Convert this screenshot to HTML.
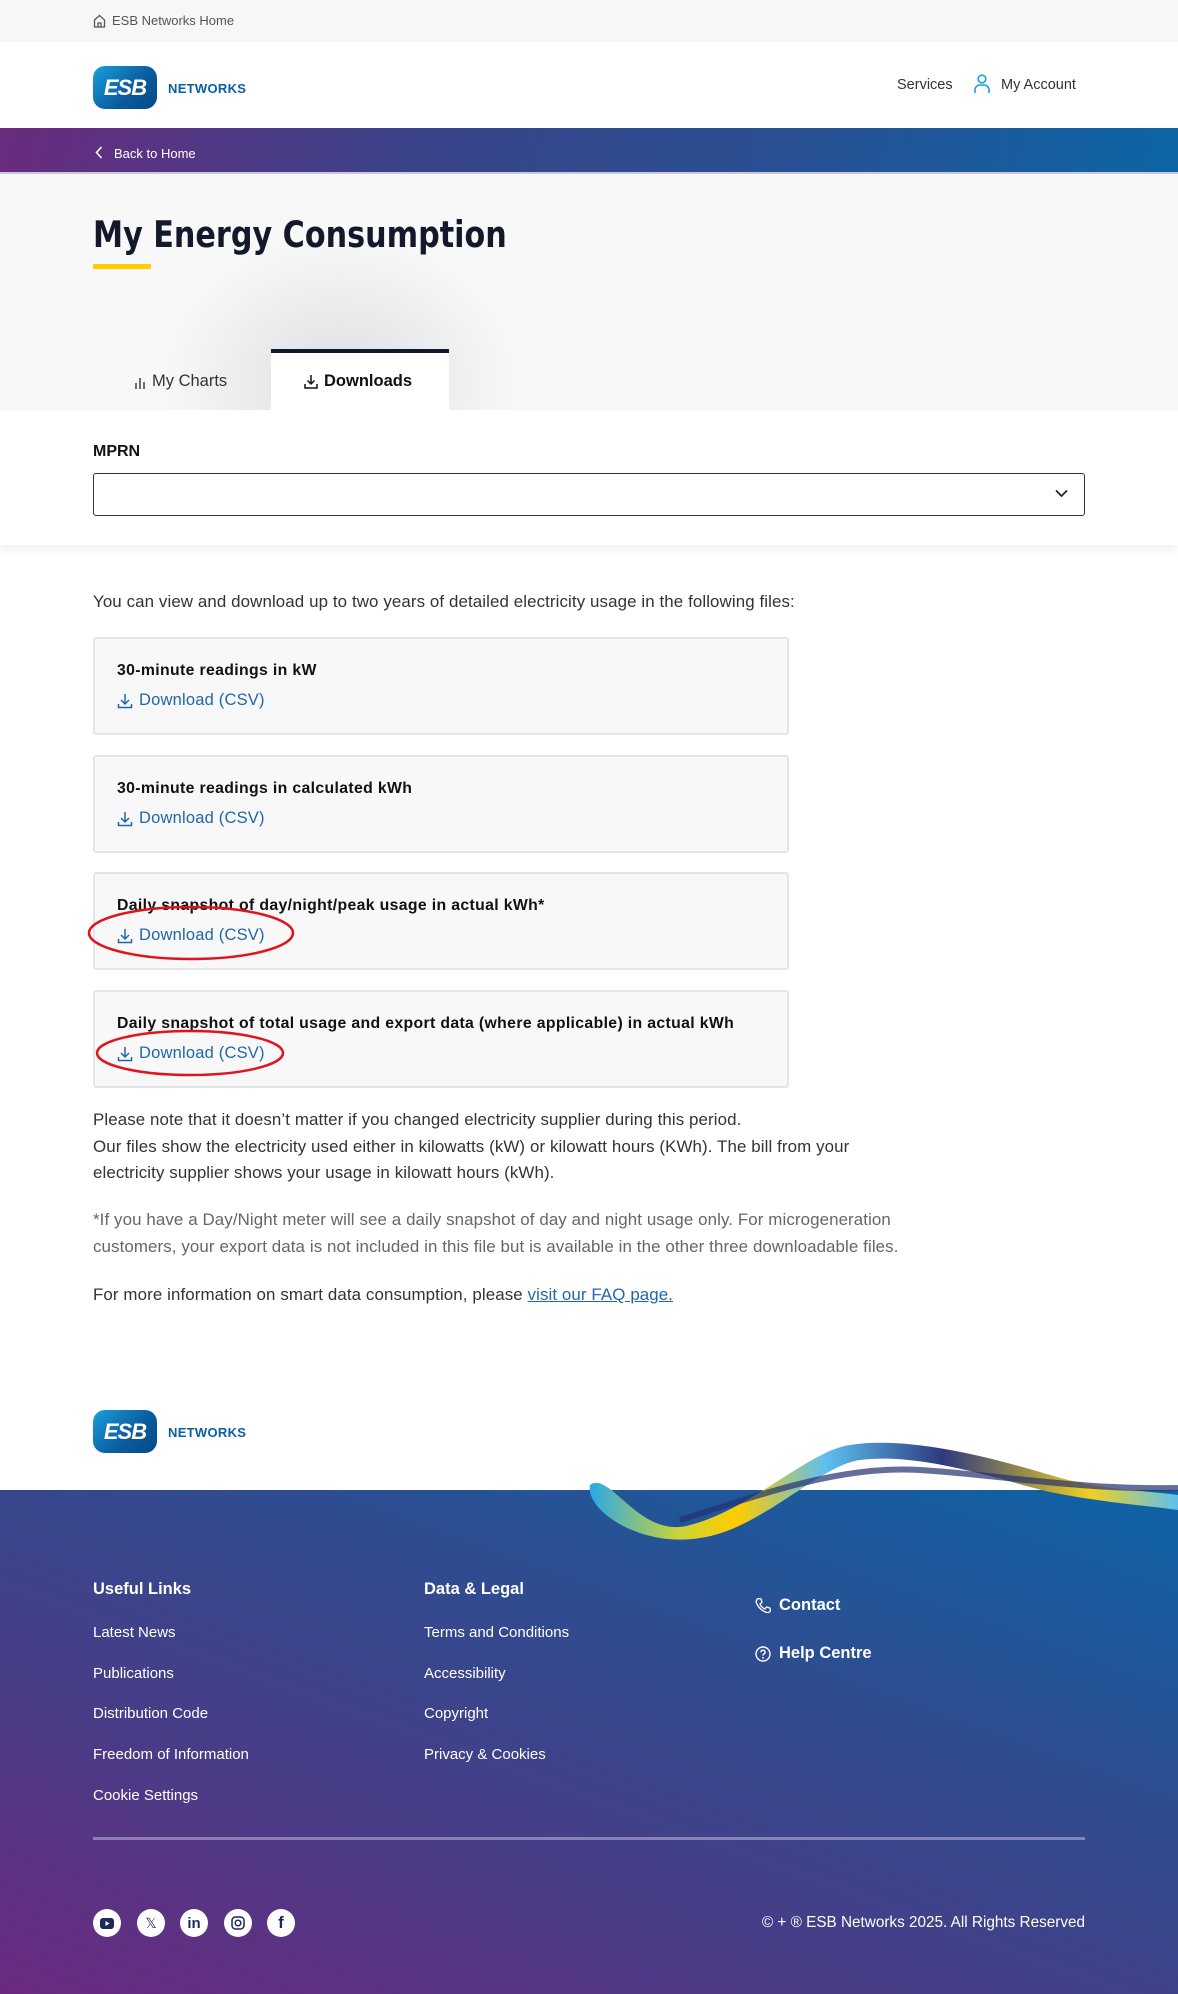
<!DOCTYPE html>
<html><head><meta charset="utf-8">
<style>
*{box-sizing:border-box;margin:0;padding:0}
body{width:1178px;height:1994px;font-family:"Liberation Sans",sans-serif;background:#fff;position:relative;overflow:hidden;color:#222}
.abs{position:absolute}
.topbar{left:0;top:0;width:1178px;height:42px;background:#f7f7f7}
.header{left:0;top:42px;width:1178px;height:86px;background:#fff}
.grad{left:0;top:128px;width:1178px;height:46px;background:linear-gradient(100deg,#6a2b7e 0%,#3a438a 35%,#2a4f92 65%,#0d65a5 100%);border-bottom:2px solid #c9c6d8}
.hero{left:0;top:174px;width:1178px;height:236px;background:#f8f8f8;overflow:hidden}
.logo{width:64px;height:43px;border-radius:12px;background:linear-gradient(135deg,#1aa0dc,#0a5a9e 60%,#074a85);color:#fff;font-weight:bold;font-size:22px;display:flex;align-items:center;justify-content:center;letter-spacing:-1px;font-style:italic}
.net{color:#0b5fa0;font-weight:bold;font-size:13px;letter-spacing:.3px}
.card{left:93px;width:696px;height:98px;background:#f8f8f8;border:2px solid #e4e5e7;border-radius:3px}
.card b{position:absolute;left:22px;top:23px;font-size:15.8px;letter-spacing:.35px;color:#111}
.card .dl{position:absolute;left:22px;top:52px;font-size:16.5px;color:#1f67a8;display:flex;align-items:center;gap:6px;letter-spacing:.2px}
.p{left:93px;font-size:16.9px;color:#333;line-height:26.5px;letter-spacing:.1px}
.footer{left:0;top:1490px;width:1178px;height:504px;background:linear-gradient(20deg,#6b2a80 0%,#473d87 35%,#2f4c90 65%,#0d64a6 100%)}
.fh{font-weight:bold;color:#fff;font-size:16.5px}
.fl{color:#fff;font-size:15px}
.soc{width:28px;height:28px;border-radius:50%;background:#fff;top:1909px;display:flex;align-items:center;justify-content:center;color:#1c2a5a;font-weight:bold;font-size:15px}
</style></head><body>
<div class="abs topbar"></div>
<div class="abs" style="left:93px;top:13px;font-size:13px;color:#555;display:flex;align-items:center;gap:6px">
<svg width="13" height="14" viewBox="0 0 13 14"><path d="M1.5 6L6.5 1.5 11.5 6V13H1.5Z M5 13V9h3v4" fill="none" stroke="#555" stroke-width="1.3"/></svg>ESB Networks Home</div>
<div class="abs header"></div>
<div class="abs logo" style="left:93px;top:66px">ESB</div>
<div class="abs net" style="left:168px;top:81px">NETWORKS</div>
<div class="abs" style="left:897px;top:77px;font-size:14.5px;color:#333">Services</div>
<svg class="abs" style="left:973px;top:74px" width="18" height="20" viewBox="0 0 18 20"><circle cx="9" cy="5" r="3.8" fill="none" stroke="#1aa0dc" stroke-width="1.6"/><path d="M2 19v-3a5 5 0 0 1 5-5h4a5 5 0 0 1 5 5v3" fill="none" stroke="#1aa0dc" stroke-width="1.6"/></svg>
<div class="abs" style="left:1001px;top:77px;font-size:14.5px;color:#333">My Account</div>
<div class="abs grad"></div>
<svg class="abs" style="left:95px;top:146px" width="8" height="13" viewBox="0 0 8 13"><path d="M6.5 1L1.5 6.5 6.5 12" fill="none" stroke="#fff" stroke-width="1.6"/></svg>
<div class="abs" style="left:114px;top:146px;font-size:13px;color:#fff">Back to Home</div>
<div class="abs hero">
 <div class="abs" style="left:160px;top:60px;width:360px;height:300px;border-radius:50%;background:radial-gradient(closest-side,rgba(200,202,208,.55),rgba(248,248,248,0))"></div>
</div>
<div class="abs" style="left:93px;top:213px;font-size:36.5px;font-weight:bold;color:#13182b;font-family:'DejaVu Sans Condensed','Liberation Sans',sans-serif;letter-spacing:0;transform:scaleX(.92);transform-origin:left top;white-space:nowrap">My Energy Consumption</div>
<div class="abs" style="left:93px;top:264px;width:58px;height:5px;background:#ffcc00;border-radius:1px"></div>
<div class="abs" style="left:134px;top:372px;font-size:16.5px;color:#333;display:flex;align-items:center;gap:6px">
<svg width="12" height="14" viewBox="0 0 12 14"><path d="M2 14V8M6 14V3M10 14V7" stroke="#333" stroke-width="1.4"/></svg>My Charts</div>
<div class="abs" style="left:271px;top:349px;width:178px;height:62px;background:#fff;border-top:4px solid #111a2c"></div>
<div class="abs" style="left:304px;top:372px;font-size:16.5px;color:#111;font-weight:bold;display:flex;align-items:center;gap:6px">
<svg width="14" height="15" viewBox="0 0 14 15"><path d="M7 1v9M3.5 6.5L7 10l3.5-3.5M1 10v4h12v-4" fill="none" stroke="#111" stroke-width="1.5"/></svg>Downloads</div>
<div class="abs" style="left:0;top:410px;width:1178px;height:135px;background:#fff;box-shadow:0 6px 8px rgba(0,0,0,.05)"></div>
<div class="abs" style="left:93px;top:443px;font-size:16px;font-weight:bold;color:#111">MPRN</div>
<div class="abs" style="left:93px;top:473px;width:992px;height:43px;border:1.5px solid #333;border-radius:3px;background:#fff"></div>
<svg class="abs" style="left:1055px;top:489px" width="13" height="9" viewBox="0 0 13 9"><path d="M1 1.5l5.5 5.5 5.5-5.5" fill="none" stroke="#222" stroke-width="1.7"/></svg>
<div class="abs p" style="top:589px">You can view and download up to two years of detailed electricity usage in the following files:</div>

<div class="abs card" style="top:637px"><b>30-minute readings in kW</b><span class="dl"><svg width="16" height="16" viewBox="0 0 16 16"><path d="M8 1v10M4 7l4 4 4-4M1.5 11v3.5h13V11" fill="none" stroke="#1f67a8" stroke-width="1.5"/></svg>Download (CSV)</span></div>
<div class="abs card" style="top:755px"><b>30-minute readings in calculated kWh</b><span class="dl"><svg width="16" height="16" viewBox="0 0 16 16"><path d="M8 1v10M4 7l4 4 4-4M1.5 11v3.5h13V11" fill="none" stroke="#1f67a8" stroke-width="1.5"/></svg>Download (CSV)</span></div>
<div class="abs card" style="top:872px"><b>Daily snapshot of day/night/peak usage in actual kWh*</b><span class="dl"><svg width="16" height="16" viewBox="0 0 16 16"><path d="M8 1v10M4 7l4 4 4-4M1.5 11v3.5h13V11" fill="none" stroke="#1f67a8" stroke-width="1.5"/></svg>Download (CSV)</span></div>
<div class="abs card" style="top:990px"><b>Daily snapshot of total usage and export data (where applicable) in actual kWh</b><span class="dl"><svg width="16" height="16" viewBox="0 0 16 16"><path d="M8 1v10M4 7l4 4 4-4M1.5 11v3.5h13V11" fill="none" stroke="#1f67a8" stroke-width="1.5"/></svg>Download (CSV)</span></div>
<svg class="abs" style="left:0;top:0" width="400" height="1100" viewBox="0 0 400 1100"><ellipse cx="191" cy="933" rx="102" ry="26" fill="none" stroke="#e0141c" stroke-width="2.5"/><ellipse cx="190" cy="1053" rx="93" ry="22" fill="none" stroke="#e0141c" stroke-width="2.5"/></svg>

<div class="abs p" style="top:1107px">Please note that it doesn’t matter if you changed electricity supplier during this period.<br>Our files show the electricity used either in kilowatts (kW) or kilowatt hours (KWh). The bill from your<br>electricity supplier shows your usage in kilowatt hours (kWh).</div>
<div class="abs p" style="top:1207px;color:#666">*If you have a Day/Night meter will see a daily snapshot of day and night usage only. For microgeneration<br>customers, your export data is not included in this file but is available in the other three downloadable files.</div>
<div class="abs p" style="top:1282px">For more information on smart data consumption, please <span style="color:#1f67a8;text-decoration:underline">visit our FAQ page.</span></div>

<div class="abs logo" style="left:93px;top:1410px">ESB</div>
<div class="abs net" style="left:168px;top:1425px">NETWORKS</div>
<div class="abs footer"></div>
<svg class="abs" style="left:580px;top:1430px" width="598" height="120" viewBox="0 0 598 120">
<defs><linearGradient id="r1" x1="0" x2="1"><stop offset="0" stop-color="#2aa8e8"/><stop offset=".15" stop-color="#c8d43a"/><stop offset=".25" stop-color="#ffcc00"/><stop offset=".4" stop-color="#5ec0f0"/><stop offset=".6" stop-color="#2d3a80"/><stop offset=".85" stop-color="#f0d020"/><stop offset="1" stop-color="#5ec0f0"/></linearGradient></defs>
<path d="M10 55 C30 40,60 110,110 95 C170 80,230 20,270 15 C330 5,420 30,470 45 C520 60,560 60,598 65 L598 80 C560 75,520 72,470 62 C420 50,340 22,280 30 C240 35,180 100,120 108 C60 118,5 80,10 55Z" fill="url(#r1)"/>
<path d="M100 90 C180 65,260 35,340 40 C420 45,500 60,598 58" fill="none" stroke="#243070" stroke-width="6" opacity=".7"/>
</svg>
<div class="abs fh" style="left:93px;top:1580px">Useful Links</div>
<div class="abs fh" style="left:424px;top:1580px">Data &amp; Legal</div>
<div class="abs fl" style="left:93px;top:1624px">Latest News</div>
<div class="abs fl" style="left:93px;top:1665px">Publications</div>
<div class="abs fl" style="left:93px;top:1705px">Distribution Code</div>
<div class="abs fl" style="left:93px;top:1746px">Freedom of Information</div>
<div class="abs fl" style="left:93px;top:1787px">Cookie Settings</div>
<div class="abs fl" style="left:424px;top:1624px">Terms and Conditions</div>
<div class="abs fl" style="left:424px;top:1665px">Accessibility</div>
<div class="abs fl" style="left:424px;top:1705px">Copyright</div>
<div class="abs fl" style="left:424px;top:1746px">Privacy &amp; Cookies</div>
<div class="abs fh" style="left:755px;top:1596px;display:flex;align-items:center;gap:8px"><svg width="16" height="17" viewBox="0 0 16 17"><path d="M3 1.5l3 .5 1 3.5-2 1.5c1 2.5 2.5 4 5 5l1.5-2 3.5 1 .5 3c-1 1.5-3 2-5 1C6 13 3 10 1.5 6 .8 4 1.5 2.5 3 1.5Z" fill="none" stroke="#fff" stroke-width="1.3"/></svg>Contact</div>
<div class="abs fh" style="left:755px;top:1644px;display:flex;align-items:center;gap:8px"><svg width="16" height="16" viewBox="0 0 16 16"><circle cx="8" cy="8" r="7" fill="none" stroke="#fff" stroke-width="1.4"/><path d="M6 6.2a2 2 0 1 1 2.8 1.8c-.6.3-.8.7-.8 1.5" fill="none" stroke="#fff" stroke-width="1.4"/><circle cx="8" cy="11.8" r=".9" fill="#fff"/></svg>Help Centre</div>
<div class="abs" style="left:93px;top:1837px;width:992px;height:3px;background:rgba(180,175,215,.6)"></div>
<div class="abs soc" style="left:93px"><svg width="14" height="11" viewBox="0 0 14 11"><rect width="14" height="11" rx="3" fill="#1c2a5a"/><path d="M5.5 3v5l4-2.5z" fill="#fff"/></svg></div>
<div class="abs soc" style="left:137px;font-weight:normal;font-size:14px">𝕏</div>
<div class="abs soc" style="left:180px">in</div>
<div class="abs soc" style="left:224px"><svg width="14" height="14" viewBox="0 0 14 14"><rect x="1" y="1" width="12" height="12" rx="3.5" fill="none" stroke="#1c2a5a" stroke-width="1.5"/><circle cx="7" cy="7" r="2.8" fill="none" stroke="#1c2a5a" stroke-width="1.5"/></svg></div>
<div class="abs soc" style="left:267px;font-size:17px">f</div>
<div class="abs" style="right:93px;top:1914px;font-size:15.3px;color:#fff">© + ® ESB Networks 2025. All Rights Reserved</div>
</body></html>
